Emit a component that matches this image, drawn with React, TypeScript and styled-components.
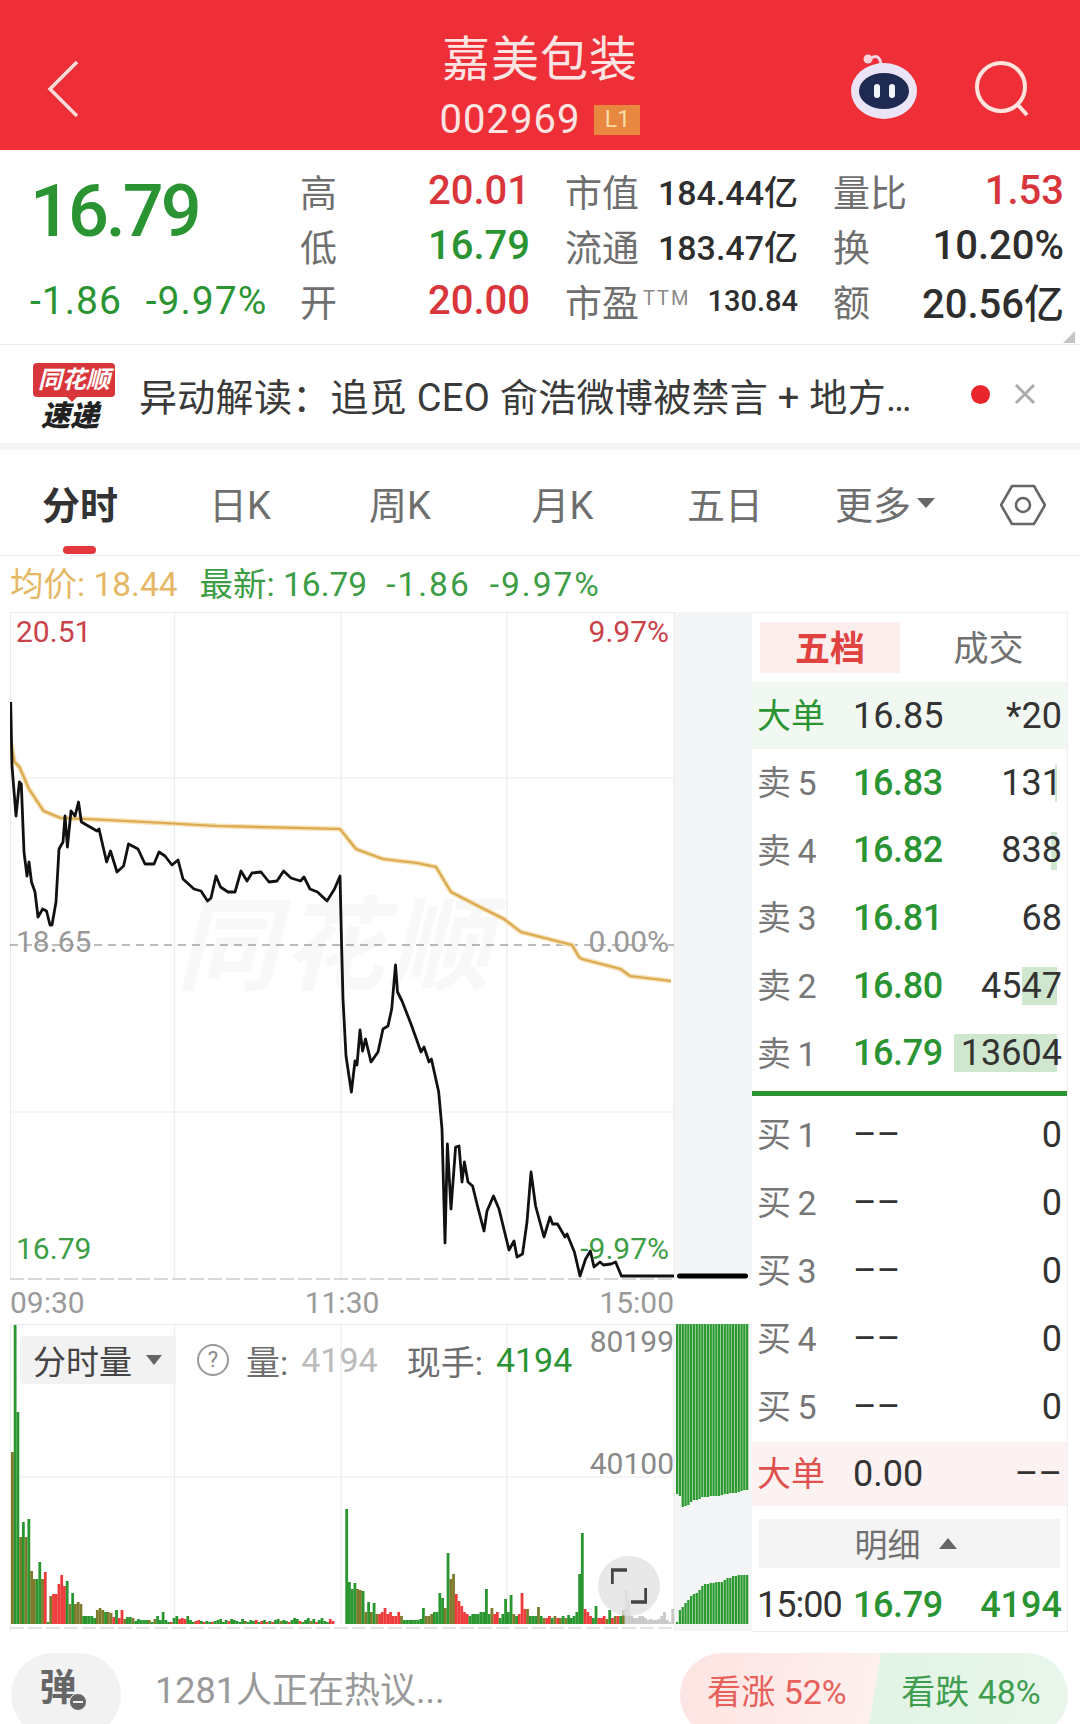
import React from 'react';
import styled, { createGlobalStyle } from 'styled-components';

const GREEN = '#2a9433';
const RED = '#d9363b';

const GlobalStyle = createGlobalStyle`
  html, body { margin: 0; padding: 0; background: #fff; }
  * { box-sizing: border-box; }
  body { font-family: Roboto, "Noto Sans CJK SC", sans-serif; }
`;

const Page = styled.div`
  width: 1080px;
  height: 1724px;
  overflow: hidden;
  background: #fff;
`;

/* ---------- header ---------- */
const Header = styled.header`
  height: 150px;
  background: #ee2f38;
  display: grid;
  grid-template-columns: 1fr auto 1fr;
  align-items: center;
  padding: 0 46px 0 46px;
`;
const HeaderLeft = styled.div`
  display: flex;
  align-items: center;
  padding-top: 28px;
`;
const HeaderMid = styled.div`
  display: flex;
  flex-direction: column;
  align-items: center;
  align-self: stretch;
  color: #fbe4e2;
  padding-top: 30px;
`;
const Title = styled.div`
  font-size: 48px;
  line-height: 60px;
  letter-spacing: 1px;
`;
const CodeLine = styled.div`
  display: flex;
  align-items: center;
  gap: 14px;
  font-size: 40px;
  line-height: 60px;
  letter-spacing: 1px;
`;
const Badge = styled.span`
  width: 46px;
  height: 30px;
  background: #e8873f;
  color: #f8dca8;
  font-size: 23px;
  letter-spacing: 0;
  line-height: 30px;
  text-align: center;
`;
const HeaderRight = styled.div`
  display: flex;
  justify-content: flex-end;
  align-items: center;
  gap: 54px;
  padding-top: 22px;
  padding-right: 0;
`;

/* ---------- quote stats ---------- */
const Stats = styled.section`
  height: 195px;
  display: flex;
  padding: 13px 16px 0 30px;
  position: relative;
  border-bottom: 1px solid #ececec;
`;
const PriceBlock = styled.div`
  width: 270px;
  display: flex;
  flex-direction: column;
`;
const BigPrice = styled.div`
  font-size: 72px;
  line-height: 96px;
  margin-top: 1px;
  letter-spacing: -3px;
  font-weight: 500;
  color: ${GREEN};
`;
const ChangeLine = styled.div`
  margin-top: 15px;
  display: flex;
  gap: 24px;
  font-size: 39px;
  line-height: 52px;
  letter-spacing: 1px;
  color: ${GREEN};
`;
const StatGrid = styled.div`
  flex: 1;
  display: grid;
  grid-template-columns: 230px 233px 231px;
  column-gap: 35px;
  grid-auto-rows: 55px;
`;
const Stat = styled.div`
  display: flex;
  justify-content: space-between;
  align-items: center;
`;
const StatLabel = styled.span`
  font-size: 37px;
  color: #6f6f6f;
`;
const Ttm = styled.sup`
  font-size: 20px;
  color: #8a8a8a;
  margin-left: 4px;
  letter-spacing: 2px;
  vertical-align: 12px;
  line-height: 0;
`;
const StatValue = styled.span<{ $color?: string; $size?: number }>`
  font-size: ${(p) => p.$size || 40}px;
  color: ${(p) => p.$color || '#2e2e2e'};
  font-weight: 500;
`;
const CornerMark = styled.i`
  position: absolute;
  right: 5px;
  bottom: 1px;
  border-left: 12px solid transparent;
  border-bottom: 12px solid #c4c4c4;
`;

/* ---------- news strip ---------- */
const News = styled.section`
  height: 105px;
  display: flex;
  align-items: center;
  padding: 0 0 0 33px;
  border-bottom: 7px solid #f5f5f5;
`;
const Logo = styled.div`
  width: 82px;
  padding-top: 6px;
  display: flex;
  flex-direction: column;
  align-items: center;
`;
const LogoTop = styled.div`
  width: 82px;
  height: 34px;
  border-radius: 4px;
  background: #d9363b;
  color: #fff;
  font-size: 24px;
  font-weight: 700;
  font-style: italic;
  line-height: 34px;
  text-align: center;
  white-space: nowrap;
  position: relative;
  &::after {
    content: '';
    position: absolute;
    left: 34px;
    bottom: -5px;
    border-left: 5px solid transparent;
    border-right: 5px solid transparent;
    border-top: 5px solid #d9363b;
  }
`;
const LogoBottom = styled.div`
  margin: 3px 8px 0 0;
  font-size: 29px;
  line-height: 32px;
  font-weight: 900;
  font-style: italic;
  color: #222;
`;
const NewsText = styled.div`
  margin-left: 24px;
  width: 809px;
  font-size: 38px;
  letter-spacing: 0.3px;
  color: #3a3a3a;
  white-space: nowrap;
  overflow: hidden;
`;
const NewsDot = styled.i`
  width: 19px;
  height: 19px;
  border-radius: 50%;
  background: #e8262c;
  margin-left: 23px;
`;
const NewsClose = styled.span`
  margin-left: 24px;
  display: flex;
  color: #aaa;
`;

/* ---------- period tabs ---------- */
const Tabs = styled.nav`
  height: 106px;
  display: flex;
  align-items: center;
  border-bottom: 1px solid #ececec;
`;
const Tab = styled.div<{ $active?: boolean; $width?: number }>`
  width: ${(p) => p.$width || 160}px;
  height: 100%;
  display: flex;
  justify-content: center;
  align-items: center;
  gap: 6px;
  font-size: 38px;
  font-weight: ${(p) => (p.$active ? 700 : 400)};
  color: ${(p) => (p.$active ? '#333' : '#6e6e6e')};
  position: relative;
  ${(p) =>
    p.$active &&
    `&::after {
      content: '';
      position: absolute;
      left: 63px;
      bottom: 1px;
      width: 33px;
      height: 8px;
      border-radius: 4px;
      background: #e5383c;
    }`}
`;
const TabCaret = styled.i`
  border-left: 9px solid transparent;
  border-right: 9px solid transparent;
  border-top: 10px solid #666;
`;
const TabIcon = styled.div`
  flex: 1;
  display: flex;
  justify-content: center;
  padding-top: 4px;
`;

/* ---------- legend ---------- */
const Legend = styled.div`
  height: 56px;
  padding: 0 0 6px 10px;
  display: flex;
  align-items: center;
  gap: 22px;
  font-size: 33.5px;
`;
const LegendItem = styled.span<{ $color: string; $spread?: boolean }>`
  color: ${(p) => p.$color};
  ${(p) => p.$spread && 'letter-spacing: 2px;'}
`;
const LegendGroup = styled.span`
  display: flex;
  align-items: baseline;
  gap: 19px;
`;

/* ---------- main ---------- */
const Main = styled.div`
  display: flex;
  padding-left: 10px;
  height: 1020px;
`;
const ChartCol = styled.div`
  width: 742px;
  display: flex;
  flex-direction: column;
`;
const ChartRow = styled.div<{ $h: number }>`
  display: flex;
  height: ${(p) => p.$h}px;
`;
const Plot = styled.div`
  position: relative;
  width: 664px;
  height: 100%;
  border-left: 1px solid #ebebeb;
`;
const PlotSvg = styled.svg`
  position: absolute;
  left: -1px;
  top: 0;
  display: block;
`;
const Watermark = styled.div`
  position: absolute;
  left: 165px;
  top: 275px;
  font-size: 102px;
  line-height: 120px;
  font-weight: 700;
  font-style: italic;
  color: #f8f8f8;
  letter-spacing: 4px;
`;
const AxisLabel = styled.span<{ $color: string; $top: number; $right?: boolean; $flush?: boolean }>`
  position: absolute;
  top: ${(p) => p.$top}px;
  ${(p) => (p.$right ? `right: ${p.$flush ? 0 : 5}px;` : 'left: 5px;')}
  font-size: 30px;
  line-height: 36px;
  color: ${(p) => p.$color};
`;
const Strip = styled.div`
  width: 78px;
  height: 100%;
  background: #f4f5f6;
`;
const StripSvg = styled.svg`
  display: block;
`;
const TimeAxis = styled.div`
  width: 664px;
  height: 44px;
  display: flex;
  justify-content: space-between;
  align-items: center;
  font-size: 30px;
  color: #9a9a9a;
`;
const VolumeSelect = styled.div`
  position: absolute;
  left: 9px;
  top: 12px;
  width: 156px;
  height: 48px;
  background: #f2f2f2;
  border-radius: 4px;
  display: flex;
  align-items: center;
  padding-left: 13px;
  gap: 14px;
  font-size: 33px;
  color: #444;
`;
const Caret = styled.i`
  border-left: 8px solid transparent;
  border-right: 8px solid transparent;
  border-top: 10px solid #666;
`;
const VolumeInfo = styled.div`
  position: absolute;
  left: 186px;
  top: 12px;
  height: 48px;
  display: flex;
  align-items: center;
  gap: 13px;
  font-size: 34px;
  color: #6e6e6e;
`;
const Help = styled.span`
  width: 32px;
  height: 32px;
  border: 2px solid #999;
  border-radius: 50%;
  margin-right: 4px;
  font-size: 22px;
  line-height: 28px;
  text-align: center;
  color: #888;
`;
const InfoValue = styled.span<{ $color: string }>`
  color: ${(p) => p.$color};
  margin-right: 16px;
`;
const ExpandBtn = styled.div`
  position: absolute;
  left: 587px;
  top: 232px;
  width: 62px;
  height: 60px;
  border-radius: 50%;
  background: rgba(226, 226, 226, 0.8);
  display: flex;
  align-items: center;
  justify-content: center;
`;

/* ---------- order book ---------- */
const Book = styled.aside`
  width: 316px;
  height: 100%;
  display: flex;
  flex-direction: column;
  border: 1px solid #eeeeee;
  border-width: 1px 1px 1px 0;
`;
const BookTabs = styled.div`
  height: 69px;
  padding: 9px 8px 0;
  display: grid;
  grid-template-columns: 140px 1fr;
`;
const BookTab = styled.div<{ $active?: boolean }>`
  height: 51px;
  display: flex;
  align-items: center;
  justify-content: center;
  padding: 0 0 5px ${(p) => (p.$active ? 0 : 18)}px;
  font-size: 35px;
  font-weight: ${(p) => (p.$active ? 700 : 400)};
  color: ${(p) => (p.$active ? '#e0423f' : '#707070')};
  background: ${(p) => (p.$active ? '#fdeeee' : 'transparent')};
`;
const BookRow = styled.div<{ $h: number; $bg?: string }>`
  height: ${(p) => p.$h}px;
  background: ${(p) => p.$bg || 'transparent'};
  display: grid;
  grid-template-columns: 96px 1fr auto;
  align-items: center;
  padding: 0 5px;
  position: relative;
`;
const BigOrderRow = styled(BookRow)`
  margin-top: 1px;
`;
const TradeRow = styled(BookRow)`
  padding-top: 12px;
`;
const RowLabel = styled.span<{ $color?: string }>`
  font-size: 34px;
  color: ${(p) => p.$color || '#777'};
  word-spacing: -2px;
  white-space: nowrap;
  position: relative;
  top: -2px;
`;
const RowPrice = styled.span<{ $color?: string }>`
  font-size: 36px;
  font-weight: ${(p) => (p.$color ? 500 : 400)};
  letter-spacing: ${(p) => (p.$color ? '-0.4px' : '0')};
  color: ${(p) => p.$color || '#333'};
  position: relative;
`;
const RowVol = styled.span<{ $color?: string }>`
  font-size: 36px;
  font-weight: ${(p) => (p.$color ? 500 : 400)};
  color: ${(p) => p.$color || '#333'};
  position: relative;
`;
const DepthBar = styled.i`
  position: absolute;
  right: 10px;
  top: 15px;
  height: 38px;
  background: #cfe6cf;
`;
const BookLine = styled.div`
  height: 5px;
  margin: 4px 0 5px;
  background: ${GREEN};
`;
const DetailBar = styled.div`
  height: 49px;
  margin: 13px 7px 0;
  background: #f4f4f5;
  display: flex;
  align-items: center;
  justify-content: center;
  gap: 18px;
  padding-right: 8px;
  font-size: 33px;
  color: #707070;
`;
const UpCaret = styled.i`
  border-left: 9px solid transparent;
  border-right: 9px solid transparent;
  border-bottom: 11px solid #666;
`;
const TimeCell = styled.span`
  font-size: 36px;
  color: #333;
  letter-spacing: -1px;
`;

/* ---------- bottom bar ---------- */
const Bottom = styled.footer`
  height: 92px;
  display: flex;
  padding: 21px 12px 0 11px;
`;
const BarrageBtn = styled.div`
  width: 110px;
  height: 84px;
  border-radius: 42px;
  background: #f2f2f2;
  display: flex;
  justify-content: center;
  align-items: center;
  padding-bottom: 20px;
  padding-right: 16px;
  font-size: 37px;
  font-weight: 700;
  color: #666;
  position: relative;
`;
const MinusDot = styled.i`
  position: absolute;
  left: 58px;
  top: 40px;
  width: 18px;
  height: 18px;
  border-radius: 50%;
  background: #666;
  border: 1px solid #f2f2f2;
  &::after {
    content: '';
    position: absolute;
    left: 3px;
    top: 7px;
    width: 10px;
    height: 2px;
    background: #eee;
  }
`;
const HotText = styled.div`
  flex: 1;
  margin-left: 34px;
  padding-bottom: 4px;
  display: flex;
  align-items: center;
  font-size: 36px;
  color: #999;
`;
const VotePill = styled.div`
  width: 388px;
  height: 84px;
  border-radius: 42px;
  background: linear-gradient(100deg, #fde4e2 0, #fdf0ee 50%, #e2f4e6 50%, #e9f6eb 100%);
  display: grid;
  grid-template-columns: 1fr 1fr;
  padding-bottom: 12px;
  font-size: 34px;
`;
const VoteItem = styled.div<{ $color: string }>`
  display: flex;
  align-items: center;
  justify-content: center;
  color: ${(p) => p.$color};
`;

/* ---------- data ---------- */
const priceLine =
  '10.7,703 12,767 16,817 19.4,783 21.3,785 24,853 27,877 29,863 31.5,883 35,893 38,918 42.7,910 46.5,912 50,926 52,926 56,903 59,850 63,843 65,817 67.4,848 71,812 75,817 78.5,803 81.4,823 97,832 99,830 106.6,863 110.5,852 117,873 123.6,867 128.5,845 138,850 145,865 154,865 159,853 165,857 172,866 178,861 183,880 194,890 201,892 207.5,902 211,899 216,877 220.5,888 228,893 235,893 241,872 247,882 252,874 261,873 269,883 277,882 283.6,872 291,879 300.5,882 304,878 310,890 317.5,893 327,902 334.5,890 340,877 341.7,950 343,1000 346,1057 351.4,1093 355,1062 357,1066 360,1031 362.6,1052 365.5,1040 371,1063 378,1053 383,1030 388,1027 391.7,1010 395.5,966 397.5,993 402,1002 411,1025 421,1053 424,1048 429,1063 431.4,1060 438.7,1093 442,1130 445,1244 447.4,1145 451,1210 455.6,1148 459,1147 462,1183 464.4,1163 468,1183 472.6,1187 477.5,1207 484,1232 487,1212 493.5,1197 499,1210 509,1251 514,1242 517,1258 522.5,1255 527,1223 531,1173 535.6,1207 544,1238 550,1218 552.6,1225 557.5,1225 565,1238 567,1235 574.4,1253 580,1277 585.6,1260 590.4,1252 594,1268 600,1263 603.5,1266 611,1265 615.6,1263 621.4,1277 674,1277';
const avgLine =
  '10.7,743 14.5,763 19.4,768 29,790 43.6,812 60.6,819 87,820 145,823 218,827 340,830 356,850 383,860 417,864 436,868 451,893 480,908 504,920 521,933 572,946 579,958 582,960 620.5,970 630,977 671,982';

const volumeSegments: [number, string][] = [
  [0, '172b 299g 212g 87b 102g 87b 105g 53b 45b 45g 62g 45b 52r 2g 28b 30r 30r 40r 49r 38r 43g 20b 31g 20b 22b 20b 8g 8g'],
  [28, '8g 8g 6g 14b 16b 14b 12g 12b 11b 7r 14g 6r 14r 5b 7g 7g 6b 3g 5g 4g 4g 4g 4b 2g 5b 8g 4g 12g 4g 2g 2r 6g 8g 5r 6r 5r 8g 4g 2g 3r 4r 3g 2r 3g 2g 2r 3g 4g 5g 2g 4g 3r 5g 4g 3g 2g 5g 3b 2g 4g 3g 4r 2g 3r 4g 2r 3g 2r 4g 5g 3b 4g 3g 2r 4g 6g 5g 3r 2g 4g 6g 3b 5g 2r 4g 6g 3g 2g 5r 3r'],
  [122, '115g 42g 35g 41g 35b 34b 33g 12b 22g 12b 21g 10b 10r 12r 16r 10r 12r 8r 8r 12r 8b 4g 4g 4g 4g 4g 4g 5g 16g 8b 8b 10b 12g 12g 31g 26g 16b 71g 45b 50b 30r 23r 18r 12r 10r 8g 10g 10g 10g 12g 12g 35g 10g 16b 10r 12r 6g 10g 25g 12g 29g 10b 8g 10r 31r 15r 15b 8g 8g 8g 17b 8g 6b 6r 8r 6g 8b 6r 6b 8g 6b 9g 6g 8g 12g 50g 91g 15r 12r 8r 6g 18g 6r 6r 8r 5b 14g 6r 8b 8r 8g 14b 34c 25c 8c 6c 6c 8c 8c 6c 4c 5c 4c 4c 5c 8c 12c 4c 2c 15c'],
];
const barColors: Record<string, string> = { g: '#2a962f', r: '#ee3b3b', b: '#7d7a2c', c: '#c8c8c8' };
const volumeBars = volumeSegments.flatMap(([start, tokens]) =>
  tokens.split(' ').map((t, i) => ({
    x: 11 + (start + i) * 2.74,
    h: parseInt(t, 10),
    color: barColors[t.slice(-1)],
  })),
);
const stripBottoms = [1495, 1497, 1508, 1507, 1506, 1503, 1501, 1501, 1500, 1498, 1498, 1498, 1497, 1497, 1497, 1497, 1496, 1495, 1495, 1494, 1494, 1494, 1493, 1492, 1491, 1491];
const stripRises = [2, 14, 17, 21, 24, 28, 30, 31, 34, 38, 40, 40, 41, 41, 42, 42, 42, 44, 46, 46, 48, 48, 49, 49, 49, 49];

const sells = [
  { label: '卖 5', price: '16.83', vol: '131', depth: 2 },
  { label: '卖 4', price: '16.82', vol: '838', depth: 6 },
  { label: '卖 3', price: '16.81', vol: '68', depth: 0 },
  { label: '卖 2', price: '16.80', vol: '4547', depth: 35 },
  { label: '卖 1', price: '16.79', vol: '13604', depth: 103 },
];
const buys = ['买 1', '买 2', '买 3', '买 4', '买 5'];

const stats = [
  { label: '高', value: '20.01', color: RED },
  { label: '市值', value: '184.44亿', size: 34 },
  { label: '量比', value: '1.53', color: RED },
  { label: '低', value: '16.79', color: GREEN },
  { label: '流通', value: '183.47亿', size: 34 },
  { label: '换', value: '10.20%' },
  { label: '开', value: '20.00', color: RED },
  { label: '市盈', ttm: true, value: '130.84', size: 29 },
  { label: '额', value: '20.56亿' },
];

/* ---------- icons ---------- */
function BackIcon() {
  return (
    <svg width="34" height="58" viewBox="0 0 34 58" fill="none">
      <path d="M31 2 L4 29 L31 56" stroke="#fbdcda" strokeWidth="3.5" />
    </svg>
  );
}
function RobotIcon() {
  return (
    <svg width="72" height="70" viewBox="0 0 72 70">
      <path d="M22 8 C28 3 32 6 33 13" fill="none" stroke="#f4d6e4" strokeWidth="3" />
      <circle cx="20" cy="8" r="4.5" fill="#f8d2d8" />
      <ellipse cx="36" cy="40" rx="33" ry="28" fill="#ebe4f6" />
      <ellipse cx="36" cy="40" rx="25" ry="18" fill="#1e2a52" />
      <rect x="26" y="33" width="6" height="14" rx="3" fill="#f3f3fb" />
      <rect x="41" y="33" width="6" height="14" rx="3" fill="#f3f3fb" />
    </svg>
  );
}
function SearchIcon() {
  return (
    <svg width="60" height="68" viewBox="0 -8 60 68" fill="none" stroke="#ffe3dc" strokeWidth="4">
      <circle cx="27" cy="27" r="24" />
      <path d="M44 45 L53 55" />
    </svg>
  );
}
function HexIcon() {
  return (
    <svg width="46" height="42" viewBox="0 0 46 42" fill="none" stroke="#666" strokeWidth="2.6">
      <path d="M12 2 H34 L45 21 L34 40 H12 L1 21 Z" strokeLinejoin="round" />
      <circle cx="23" cy="21" r="7" />
    </svg>
  );
}
function CloseIcon() {
  return (
    <svg width="22" height="22" viewBox="0 0 22 22" stroke="#aaa" strokeWidth="3">
      <path d="M2 2 L20 20 M20 2 L2 20" />
    </svg>
  );
}
function ExpandIcon() {
  return (
    <svg width="36" height="36" viewBox="0 0 36 36" fill="none" stroke="#444" strokeWidth="3.5">
      <path d="M1 16 V2 H16" />
      <path d="M35 20 V34 H20" />
    </svg>
  );
}

function PricePlot() {
  return (
    <Plot>
      <Watermark>同花顺</Watermark>
      <PlotSvg width="665" height="668" viewBox="10 613 665 668">
        <path
          d="M10 613.5 H674 M10 779 H674 M10 1113 H674 M174.5 613 V1280 M341 613 V1280 M507 613 V1280 M674 613 V1280"
          stroke="#ebebeb"
          strokeWidth="1.2"
          fill="none"
        />
        <path d="M10 946 H674" stroke="#777" strokeWidth="1.2" strokeDasharray="8 6" />
        <path d="M10 1280 H674" stroke="#ccc" strokeWidth="1.5" strokeDasharray="14 4" />
        <polyline points={avgLine} fill="none" stroke="#f5dfb4" strokeWidth="5" />
        <polyline points={avgLine} fill="none" stroke="#dba94e" strokeWidth="2.2" />
        <polyline points={priceLine} fill="none" stroke="#111" strokeWidth="2.8" strokeLinejoin="round" />
      </PlotSvg>
      <AxisLabel $color="#c9424a" $top={2}>20.51</AxisLabel>
      <AxisLabel $color="#c9424a" $top={2} $right>9.97%</AxisLabel>
      <AxisLabel $color="#999" $top={312}>18.65</AxisLabel>
      <AxisLabel $color="#999" $top={312} $right>0.00%</AxisLabel>
      <AxisLabel $color="#3d9d45" $top={619}>16.79</AxisLabel>
      <AxisLabel $color="#3d9d45" $top={619} $right>-9.97%</AxisLabel>
    </Plot>
  );
}

function VolumePlot() {
  return (
    <Plot>
      <PlotSvg width="665" height="307" viewBox="10 1325 665 307">
        <path
          d="M10 1325.5 H674 M10 1478 H674 M174.5 1325 V1625 M341 1325 V1625 M507 1325 V1625 M674 1325 V1625"
          stroke="#ebebeb"
          strokeWidth="1.2"
          fill="none"
        />
        <path d="M10 1629 H674" stroke="#ddd" strokeWidth="1.5" strokeDasharray="14 4" />
        {volumeBars.map((b, i) => (
          <rect key={i} x={b.x} y={1625 - b.h} width="2.8" height={b.h} fill={b.color} />
        ))}
      </PlotSvg>
      <VolumeSelect>
        分时量
        <Caret />
      </VolumeSelect>
      <VolumeInfo>
        <Help>?</Help>
        <span>量:</span>
        <InfoValue $color="#bbb">4194</InfoValue>
        <span>现手:</span>
        <InfoValue $color={GREEN}>4194</InfoValue>
      </VolumeInfo>
      <AxisLabel $color="#888" $top={0} $right $flush>80199</AxisLabel>
      <AxisLabel $color="#888" $top={122} $right $flush>40100</AxisLabel>
      <ExpandBtn>
        <ExpandIcon />
      </ExpandBtn>
    </Plot>
  );
}

function PriceStrip() {
  return (
    <Strip>
      <StripSvg width="78" height="668" viewBox="674 613 78 668">
        <rect x="677" y="1274.5" width="71" height="5" rx="2.5" fill="#000" />
      </StripSvg>
    </Strip>
  );
}

function VolumeStrip() {
  return (
    <Strip>
      <StripSvg width="78" height="307" viewBox="674 1325 78 307">
        {stripBottoms.map((y, i) => (
          <rect key={i} x={676 + i * 2.8} y={1325} width="2.3" height={y - 1325} fill="#2a9a2f" />
        ))}
        {stripRises.map((h, i) => (
          <rect key={i} x={676 + i * 2.8} y={1625 - h} width="2.3" height={h} fill="#2a9a2f" />
        ))}
      </StripSvg>
    </Strip>
  );
}

export default function App() {
  return (
    <Page>
      <GlobalStyle />
      <Header>
        <HeaderLeft>
          <BackIcon />
        </HeaderLeft>
        <HeaderMid>
          <Title>嘉美包装</Title>
          <CodeLine>
            002969
            <Badge>L1</Badge>
          </CodeLine>
        </HeaderMid>
        <HeaderRight>
          <RobotIcon />
          <SearchIcon />
        </HeaderRight>
      </Header>

      <Stats>
        <PriceBlock>
          <BigPrice>16.79</BigPrice>
          <ChangeLine>
            <span>-1.86</span>
            <span>-9.97%</span>
          </ChangeLine>
        </PriceBlock>
        <StatGrid>
          {stats.map((s) => (
            <Stat key={s.label}>
              <StatLabel>
                {s.label}
                {s.ttm && <Ttm>TTM</Ttm>}
              </StatLabel>
              <StatValue $color={s.color} $size={s.size}>
                {s.value}
              </StatValue>
            </Stat>
          ))}
        </StatGrid>
        <CornerMark />
      </Stats>

      <News>
        <Logo>
          <LogoTop>同花顺</LogoTop>
          <LogoBottom>速递</LogoBottom>
        </Logo>
        <NewsText>异动解读：追觅 CEO 俞浩微博被禁言 + 地方…</NewsText>
        <NewsDot />
        <NewsClose>
          <CloseIcon />
        </NewsClose>
      </News>

      <Tabs>
        <Tab $active>分时</Tab>
        <Tab>日K</Tab>
        <Tab>周K</Tab>
        <Tab $width={165}>月K</Tab>
        <Tab>五日</Tab>
        <Tab>
          更多
          <TabCaret />
        </Tab>
        <TabIcon>
          <HexIcon />
        </TabIcon>
      </Tabs>

      <Legend>
        <LegendItem $color="#e6b765">均价: 18.44</LegendItem>
        <LegendGroup>
          <LegendItem $color="#3d9d45">最新: 16.79</LegendItem>
          <LegendItem $color="#3d9d45" $spread>-1.86</LegendItem>
          <LegendItem $color="#3d9d45" $spread>-9.97%</LegendItem>
        </LegendGroup>
      </Legend>

      <Main>
        <ChartCol>
          <ChartRow $h={668}>
            <PricePlot />
            <PriceStrip />
          </ChartRow>
          <TimeAxis>
            <span>09:30</span>
            <span>11:30</span>
            <span>15:00</span>
          </TimeAxis>
          <ChartRow $h={307}>
            <VolumePlot />
            <VolumeStrip />
          </ChartRow>
        </ChartCol>

        <Book>
          <BookTabs>
            <BookTab $active>五档</BookTab>
            <BookTab>成交</BookTab>
          </BookTabs>
          <BookRow $h={67} $bg="#f0f8f1">
            <RowLabel $color={GREEN}>大单</RowLabel>
            <RowPrice>16.85</RowPrice>
            <RowVol>*20</RowVol>
          </BookRow>
          {sells.map((r) => (
            <BookRow key={r.label} $h={67.6}>
              {r.depth > 0 && <DepthBar style={{ width: r.depth }} />}
              <RowLabel>{r.label}</RowLabel>
              <RowPrice $color={GREEN}>{r.price}</RowPrice>
              <RowVol>{r.vol}</RowVol>
            </BookRow>
          ))}
          <BookLine />
          {buys.map((label) => (
            <BookRow key={label} $h={68}>
              <RowLabel>{label}</RowLabel>
              <RowPrice>––</RowPrice>
              <RowVol>0</RowVol>
            </BookRow>
          ))}
          <BigOrderRow $h={64} $bg="#fdf2f2">
            <RowLabel $color="#e0504c">大单</RowLabel>
            <RowPrice>0.00</RowPrice>
            <RowVol>––</RowVol>
          </BigOrderRow>
          <DetailBar>
            明细
            <UpCaret />
          </DetailBar>
          <TradeRow $h={63}>
            <TimeCell>15:00</TimeCell>
            <RowPrice $color={GREEN}>16.79</RowPrice>
            <RowVol $color={GREEN}>4194</RowVol>
          </TradeRow>
        </Book>
      </Main>

      <Bottom>
        <BarrageBtn>
          弹
          <MinusDot />
        </BarrageBtn>
        <HotText>1281人正在热议...</HotText>
        <VotePill>
          <VoteItem $color="#e8605a">看涨 52%</VoteItem>
          <VoteItem $color="#3f9e4f">看跌 48%</VoteItem>
        </VotePill>
      </Bottom>
    </Page>
  );
}
